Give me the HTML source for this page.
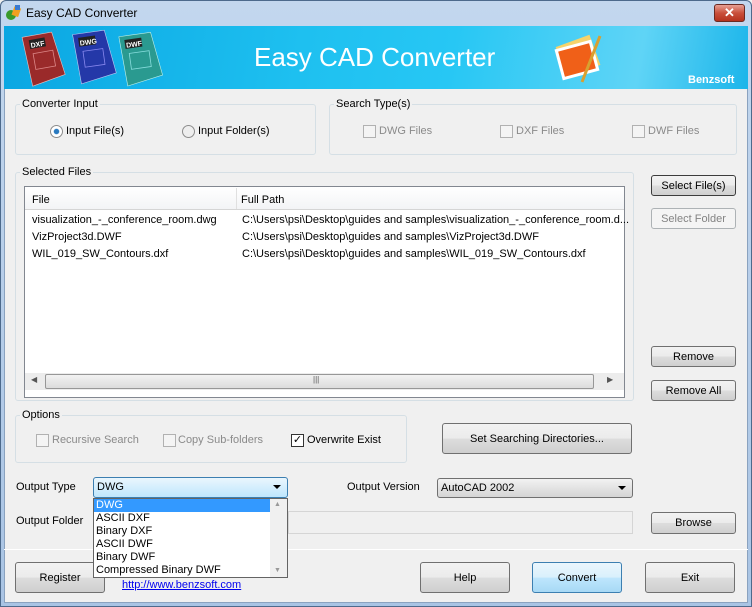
<!DOCTYPE html>
<html><head><meta charset="utf-8"><style>
*{box-sizing:border-box;margin:0;padding:0}
body{width:752px;height:607px;overflow:hidden;font-family:"Liberation Sans",sans-serif;font-size:11px;color:#000;background:#f0f0f0;position:relative}
.a{position:absolute}
.win{left:0;top:0;width:752px;height:607px;background:linear-gradient(#c3d7ee,#a9c4e4);border:1px solid #4d6a8c;border-radius:6px 6px 0 0}
.client{left:4px;top:26px;width:744px;height:577px;background:#f0f0f0;border:1px solid #8aa2bf}
.grp{position:absolute;border:1px solid #d5dfe5;border-radius:3px}
.lbl{position:absolute;background:#f0f0f0;padding:0 2px;white-space:nowrap}
.btn{position:absolute;border:1px solid #707070;border-radius:3px;background:linear-gradient(#f2f2f2 0,#ebebeb 50%,#dddddd 51%,#cfcfcf 100%);text-align:center;display:flex;align-items:center;justify-content:center;font-size:11px}
.dis{border-color:#adb2b5;background:#f4f4f4;color:#838383}
.cb{position:absolute;width:13px;height:13px;border:1px solid #b1b1b1;background:#f4f4f4}
.t{position:absolute;white-space:nowrap}
.g{color:#8a8a8a}
.combo{position:absolute;border:1px solid #707070;border-radius:3px;background:linear-gradient(#f2f2f2,#e3e3e3 50%,#d5d5d5);padding:3px 3px;font-size:11px}
.arr{position:absolute;right:6px;top:7px;width:0;height:0;border-left:4px solid transparent;border-right:4px solid transparent;border-top:4px solid #000}
</style></head><body>
<div class="a win"></div>
<svg class="a" style="left:5px;top:4px" width="18" height="18" viewBox="0 0 18 18"><circle cx="6" cy="11" r="5" fill="#3a9a2a"/><rect x="8" y="3" width="7" height="9" fill="#f0a020" transform="rotate(20 11 7)"/><rect x="10" y="1" width="5" height="5" fill="#3a7ad0"/></svg>
<div class="t" style="left:26px;top:6px;font-size:12px">Easy CAD Converter</div>
<div class="a" style="left:714px;top:4px;width:31px;height:18px;border:1px solid #6b2a22;border-radius:3px;background:linear-gradient(#e8a093,#c9503c 50%,#b5321e);color:#fff;font-weight:bold;font-size:13px;text-align:center;line-height:15px">✕</div>
<div class="a client"></div>
<div class="a" style="left:4px;top:26px;width:744px;height:63px;background:linear-gradient(100deg,#0aa6e2 0%,#1ec0f0 40%,#27c7f4 60%,#5fd4f6 85%,#1bb5ea 100%)"></div>
<svg class="a" style="left:18px;top:28px" width="170" height="60" viewBox="0 0 170 60">
<g transform="rotate(-10 25 30)"><path d="M8 6h30l6 44-34 6z" fill="#9a2a2a" stroke="#e8c0c0" stroke-width="0.6"/><rect x="14" y="10" width="16" height="9" fill="#222"/><text x="15" y="18" font-size="7" fill="#fff" font-family="Liberation Sans" font-weight="bold">DXF</text><rect x="16" y="24" width="20" height="16" fill="none" stroke="#d88" stroke-width="0.8"/></g>
<g transform="rotate(-8 75 30)"><path d="M58 4h32l6 44-36 6z" fill="#2438a8" stroke="#c0c8f0" stroke-width="0.6"/><rect x="63" y="8" width="17" height="9" fill="#222"/><text x="64" y="16" font-size="7" fill="#fff" font-family="Liberation Sans" font-weight="bold">DWG</text><rect x="66" y="22" width="20" height="16" fill="none" stroke="#88e" stroke-width="0.8"/></g>
<g transform="rotate(-8 122 30)"><path d="M104 6h32l6 44-36 6z" fill="#2a9a90" stroke="#c0f0e8" stroke-width="0.6"/><rect x="109" y="10" width="17" height="9" fill="#222"/><text x="110" y="18" font-size="7" fill="#fff" font-family="Liberation Sans" font-weight="bold">DWF</text><rect x="112" y="24" width="20" height="16" fill="none" stroke="#8dd" stroke-width="0.8"/></g>
</svg>
<svg class="a" style="left:552px;top:30px" width="60" height="56" viewBox="0 0 60 56"><rect x="8" y="10" width="36" height="32" fill="#f6d36a" transform="rotate(-20 26 26)"/><rect x="6" y="14" width="38" height="32" fill="#fff" transform="rotate(-15 25 30)"/><rect x="9" y="17" width="32" height="26" fill="#f06018" transform="rotate(-15 25 30)"/><path d="M48 6 L30 52" stroke="#d8a030" stroke-width="3"/></svg>
<div class="t" style="left:254px;top:42px;font-size:26px;color:#fff">Easy CAD Converter</div>
<div class="t" style="left:688px;top:74px;font-size:11px;font-weight:bold;color:#fff">Benzsoft</div>

<div class="grp" style="left:15px;top:104px;width:301px;height:51px"></div><div class="lbl" style="left:20px;top:98px">Converter Input</div>
<div class="a" style="left:50px;top:125px;width:13px;height:13px;border-radius:50%;border:1px solid #8c8c8c;background:radial-gradient(#2a7ac0 30%,#fff 40%)"></div><div class="t" style="left:66px;top:125px">Input File(s)</div>
<div class="a" style="left:182px;top:125px;width:13px;height:13px;border-radius:50%;border:1px solid #8c8c8c;background:#eee"></div><div class="t" style="left:198px;top:125px">Input Folder(s)</div>
<div class="grp" style="left:329px;top:104px;width:408px;height:51px"></div><div class="lbl" style="left:334px;top:98px">Search Type(s)</div>
<div class="cb" style="left:363px;top:125px"></div><div class="t g" style="left:379px;top:125px">DWG Files</div>
<div class="cb" style="left:500px;top:125px"></div><div class="t g" style="left:516px;top:125px">DXF Files</div>
<div class="cb" style="left:632px;top:125px"></div><div class="t g" style="left:648px;top:125px">DWF Files</div>

<div class="grp" style="left:15px;top:172px;width:619px;height:229px"></div><div class="lbl" style="left:20px;top:166px">Selected Files</div>
<div class="a" style="left:24px;top:186px;width:601px;height:212px;background:#fff;border:1px solid #828790"></div>
<div class="a" style="left:25px;top:187px;width:599px;height:23px;background:linear-gradient(#fff,#f3f4f6);border-bottom:1px solid #d5d5d5"></div>
<div class="a" style="left:236px;top:188px;width:1px;height:21px;background:#e0e0e0"></div>
<div class="t" style="left:32px;top:194px">File</div><div class="t" style="left:241px;top:194px">Full Path</div>
<div class="t" style="left:32px;top:214px">visualization_-_conference_room.dwg</div><div class="t" style="left:242px;top:214px">C:\Users\psi\Desktop\guides and samples\visualization_-_conference_room.d...</div>
<div class="t" style="left:32px;top:231px">VizProject3d.DWF</div><div class="t" style="left:242px;top:231px">C:\Users\psi\Desktop\guides and samples\VizProject3d.DWF</div>
<div class="t" style="left:32px;top:248px">WIL_019_SW_Contours.dxf</div><div class="t" style="left:242px;top:248px">C:\Users\psi\Desktop\guides and samples\WIL_019_SW_Contours.dxf</div>
<div class="a" style="left:25px;top:373px;width:599px;height:17px;background:#ececec"></div>
<div class="a" style="left:45px;top:374px;width:549px;height:15px;border:1px solid #979797;border-radius:2px;background:linear-gradient(#f2f2f2,#dcdcdc)"></div>
<div class="t" style="left:313px;top:375px;font-size:8px;color:#555">|||</div>
<div class="t" style="left:31px;top:375px;font-size:8px;color:#555">◀</div><div class="t" style="left:607px;top:375px;font-size:8px;color:#555">▶</div>

<div class="btn" style="left:651px;top:175px;width:85px;height:21px;border-color:#3c3c3c">Select File(s)</div>
<div class="btn dis" style="left:651px;top:208px;width:85px;height:21px">Select Folder</div>
<div class="btn" style="left:651px;top:346px;width:85px;height:21px">Remove</div>
<div class="btn" style="left:651px;top:380px;width:85px;height:21px">Remove All</div>

<div class="grp" style="left:15px;top:415px;width:392px;height:48px"></div><div class="lbl" style="left:20px;top:409px">Options</div>
<div class="cb" style="left:36px;top:434px"></div><div class="t g" style="left:52px;top:434px">Recursive Search</div>
<div class="cb" style="left:163px;top:434px"></div><div class="t g" style="left:178px;top:434px">Copy Sub-folders</div>
<div class="cb" style="left:291px;top:434px;border-color:#333;background:#fff;font-size:11px;line-height:11px;text-align:center">✓</div><div class="t" style="left:307px;top:434px">Overwrite Exist</div>
<div class="btn" style="left:442px;top:423px;width:190px;height:31px">Set Searching Directories...</div>

<div class="t" style="left:16px;top:481px">Output Type</div>
<div class="combo" style="left:93px;top:477px;width:195px;height:21px;border-color:#3c7fb1;background:linear-gradient(#eaf6fd,#bee6fd)">DWG<div class="arr"></div></div>
<div class="t" style="left:347px;top:481px">Output Version</div>
<div class="combo" style="left:437px;top:478px;width:196px;height:20px">AutoCAD 2002<div class="arr"></div></div>
<div class="t" style="left:16px;top:515px">Output Folder</div>
<div class="a" style="left:288px;top:511px;width:345px;height:23px;border:1px solid #d5d5d5;background:#f0f0f0"></div>
<div class="btn" style="left:651px;top:512px;width:85px;height:22px">Browse</div>
<div class="a" style="left:4px;top:549px;width:744px;height:1px;background:#a0a0a0;border-bottom:1px solid #fff"></div>

<div class="btn" style="left:15px;top:562px;width:90px;height:31px">Register</div>
<div class="t" style="left:122px;top:579px;color:#0000ee;text-decoration:underline">http://www.benzsoft.com</div>
<div class="btn" style="left:420px;top:562px;width:90px;height:31px">Help</div>
<div class="btn" style="left:532px;top:562px;width:90px;height:31px;border-color:#3c7fb1;background:linear-gradient(#eaf6fd,#d9f0fc 50%,#bee6fd 51%,#a7d9f5)">Convert</div>
<div class="btn" style="left:645px;top:562px;width:90px;height:31px">Exit</div>

<div class="a" style="left:93px;top:498px;width:195px;height:80px;background:#fff;border:1px solid #646464"></div>
<div class="a" style="left:94px;top:499px;width:176px;height:13px;background:#3399ff"></div>
<div class="a" style="left:270px;top:499px;width:17px;height:78px;background:#f0f0f0"></div>
<div class="t" style="left:274px;top:501px;font-size:7px;color:#999">▲</div><div class="t" style="left:274px;top:567px;font-size:7px;color:#999">▼</div>
<div class="t" style="left:96px;top:499px;color:#fff;line-height:13px">DWG</div>
<div class="t" style="left:96px;top:512px;line-height:13px">ASCII DXF</div>
<div class="t" style="left:96px;top:525px;line-height:13px">Binary DXF</div>
<div class="t" style="left:96px;top:538px;line-height:13px">ASCII DWF</div>
<div class="t" style="left:96px;top:551px;line-height:13px">Binary DWF</div>
<div class="t" style="left:96px;top:564px;line-height:13px">Compressed Binary DWF</div>
</body></html>
